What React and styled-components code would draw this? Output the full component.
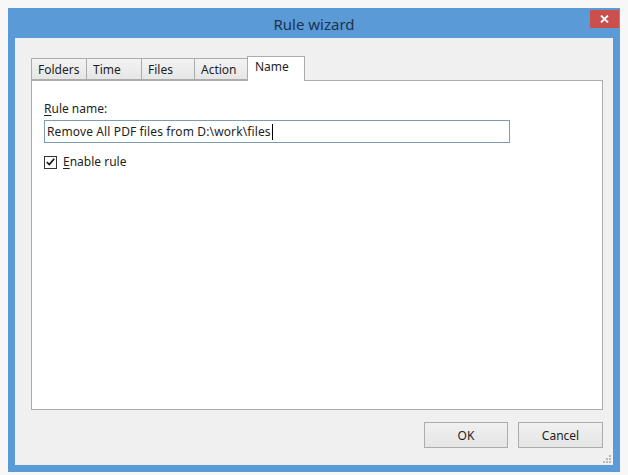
import React from 'react'
import styled, {createGlobalStyle} from 'styled-components'

const GlobalStyle = createGlobalStyle`
  html, body {
    margin: 0;
    padding: 0;
    background: #f7f7f7;
  }
  body {
    font-family: "Noto Sans", "Open Sans", sans-serif;
    font-size: 12px;
    color: #1e1e1e;
  }
`

const Page = styled.div`
  padding: 8px;
`

const Window = styled.div`
  width: 612px;
  height: 464px;
  box-sizing: border-box;
  background: #5a9ad6;
  padding: 0 7px 7px 7px;
  display: flex;
  flex-direction: column;
`

const TitleBar = styled.div`
  position: relative;
  height: 30px;
  display: flex;
  align-items: center;
  justify-content: center;
`

const Title = styled.span`
  font-size: 15px;
  color: #1c3450;
  padding-top: 1px;
`

const CloseButton = styled.div`
  position: absolute;
  top: 2px;
  right: -6px;
  width: 29px;
  height: 18px;
  background: #c9504d;
  display: flex;
  align-items: center;
  justify-content: center;
  color: #fff;
`

const Body = styled.div`
  flex: 1;
  background: #f0f0f0;
  padding: 17px 10px 0 16px;
  display: flex;
  flex-direction: column;
  position: relative;
`

const TabRow = styled.div`
  display: flex;
  align-items: flex-end;
  height: 25px;
  position: relative;
  z-index: 1;
`

const Tab = styled.div`
  box-sizing: border-box;
  width: ${p => p.w}px;
  height: ${p => (p.active ? 25 : 22)}px;
  margin-bottom: ${p => (p.active ? -1 : 0)}px;
  margin-left: ${p => (p.first ? 0 : -1)}px;
  padding: ${p => (p.active ? '2px 0 0 7px' : '3px 0 0 6px')};
  border: 1px solid #acacac;
  border-bottom: ${p => (p.active ? 'none' : '1px solid #acacac')};
  background: ${p =>
    p.active ? '#ffffff' : 'linear-gradient(#f3f3f3, #e6e6e6)'};
  font-size: 12px;
  line-height: 16px;
  color: #1e1e1e;
`

const Panel = styled.div`
  box-sizing: border-box;
  width: 572px;
  height: 330px;
  background: #fff;
  border: 1px solid #acacac;
  padding: 20px 12px 0 12px;
  display: flex;
  flex-direction: column;
`

const Label = styled.div`
  line-height: 16px;
  margin-bottom: 3px;
`

const Key = styled.span`
  text-decoration: underline;
  text-underline-offset: 2px;
`

const TextInput = styled.div`
  box-sizing: border-box;
  width: 466px;
  height: 23px;
  border: 1px solid #7a9cb4;
  padding: 0 0 0 2px;
  display: flex;
  align-items: center;
  line-height: 16px;
  letter-spacing: 0.12px;
`

const Caret = styled.span`
  display: inline-block;
  width: 1px;
  height: 16px;
  background: #000;
  margin-left: 1px;
`

const CheckRow = styled.div`
  display: flex;
  align-items: center;
  gap: 6px;
  margin-top: 11px;
  line-height: 16px;
`

const CheckBox = styled.div`
  box-sizing: border-box;
  width: 13px;
  height: 13px;
  border: 1px solid #333;
  background: #fff;
  display: flex;
  align-items: center;
  justify-content: center;
`

const ButtonRow = styled.div`
  display: flex;
  justify-content: flex-end;
  gap: 10px;
  width: 572px;
  margin-top: 12px;
`

const Button = styled.div`
  box-sizing: border-box;
  width: ${p => p.w}px;
  height: 26px;
  border: 1px solid #acacac;
  background: linear-gradient(#f0f0f0, #e5e5e5);
  display: flex;
  align-items: center;
  justify-content: center;
  font-size: 12px;
`

const Grip = styled.svg`
  position: absolute;
  right: 2px;
  bottom: 2px;
`

const tabs = [
  {name: 'Folders', w: 56},
  {name: 'Time', w: 56},
  {name: 'Files', w: 54},
  {name: 'Action', w: 54},
  {name: 'Name', w: 58, active: true}
]

export default function App() {
  return (
    <Page>
      <GlobalStyle />
      <Window>
        <TitleBar>
          <Title>Rule wizard</Title>
          <CloseButton>
            <svg width="9" height="8" viewBox="0 0 9 8">
              <path d="M1 0.5 L8 7.5 M8 0.5 L1 7.5" stroke="#fff" strokeWidth="1.8" />
            </svg>
          </CloseButton>
        </TitleBar>
        <Body>
          <TabRow>
            {tabs.map((t, i) => (
              <Tab key={t.name} w={t.w} active={t.active} first={i === 0}>
                {t.name}
              </Tab>
            ))}
          </TabRow>
          <Panel>
            <Label>
              <Key>R</Key>ule name:
            </Label>
            <TextInput>
              Remove All PDF files from D:\work\files
              <Caret />
            </TextInput>
            <CheckRow>
              <CheckBox>
                <svg width="9" height="8" viewBox="0 0 9 8">
                  <path d="M0.8 4 L3.3 6.6 L8.2 0.8" fill="none" stroke="#111" strokeWidth="1.6" />
                </svg>
              </CheckBox>
              <span>
                <Key>E</Key>nable rule
              </span>
            </CheckRow>
          </Panel>
          <ButtonRow>
            <Button w={84}>OK</Button>
            <Button w={85}>Cancel</Button>
          </ButtonRow>
          <Grip width="8" height="8" viewBox="0 0 8 8">
            <g fill="#b8b8b8">
              <rect x="6" y="0" width="2" height="2" />
              <rect x="3" y="3" width="2" height="2" />
              <rect x="6" y="3" width="2" height="2" />
              <rect x="0" y="6" width="2" height="2" />
              <rect x="3" y="6" width="2" height="2" />
              <rect x="6" y="6" width="2" height="2" />
            </g>
          </Grip>
        </Body>
      </Window>
    </Page>
  )
}
